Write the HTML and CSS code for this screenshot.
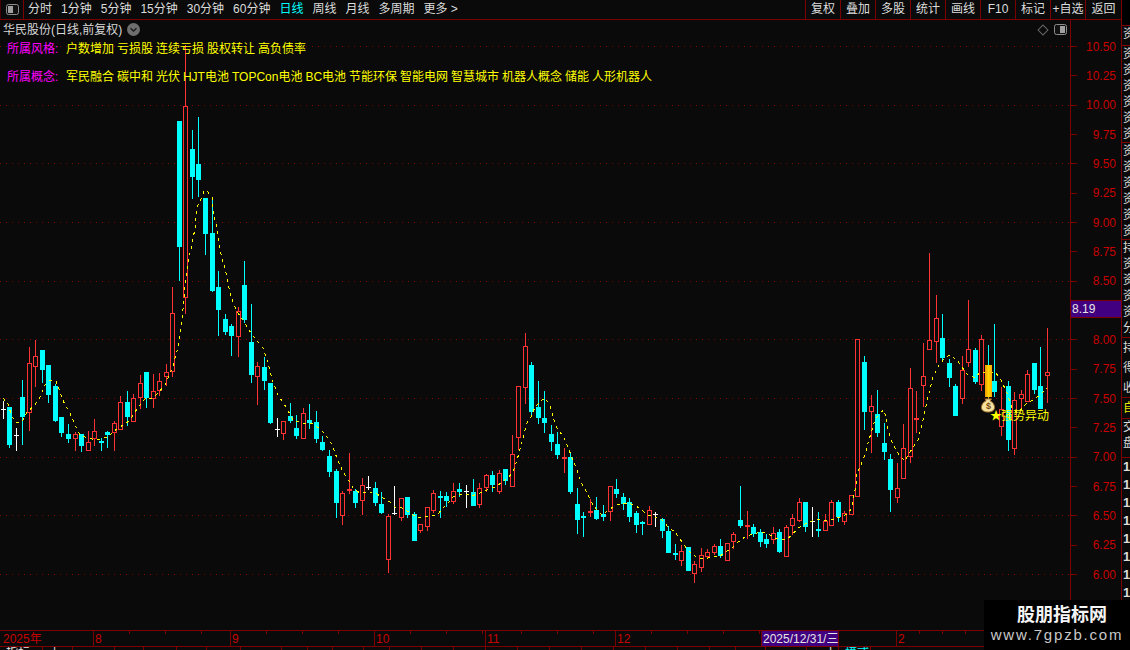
FILE: index.html
```html
<!DOCTYPE html>
<html lang="zh-CN">
<head>
<meta charset="utf-8">
<title>华民股份 日线</title>
<link rel="stylesheet" href="styles.css">
</head>
<body>
<div class="app">
  <header class="toolbar">
    <div class="toolbar-main">
      <div class="panel-btn">
        <svg class="panel-icon" viewBox="0 0 13 11"><rect x="0.5" y="0.5" width="12" height="10" rx="2" class="icon-frame"/><rect x="2" y="2" width="5" height="7" class="icon-fill"/></svg>
      </div>
      <nav class="periods">
        <span>分时</span><span>1分钟</span><span>5分钟</span><span>15分钟</span><span>30分钟</span><span>60分钟</span><span class="active">日线</span><span>周线</span><span>月线</span><span>多周期</span><span>更多 &gt;</span>
      </nav>
      <div class="actions">
        <span>复权</span><span>叠加</span><span>多股</span><span>统计</span><span>画线</span><span>F10</span><span>标记</span><span>+自选</span><span>返回</span>
      </div>
    </div>
    <div class="toolbar-end"></div>
  </header>

  <main class="main">
    <section class="chart">
      <svg id="plot" class="plot" viewBox="0 20 1070 610">
        <defs>
          <linearGradient id="signalBar" x1="0" x2="1" y1="0" y2="0">
            <stop offset="0" stop-color="#f09a00"/>
            <stop offset="0.5" stop-color="#ffd400"/>
            <stop offset="1" stop-color="#ffab00"/>
          </linearGradient>
        </defs>
      </svg>
      <div class="legend">
        <div class="title-row"><span>华民股份(日线,前复权)</span>
          <svg class="chevron" viewBox="0 0 13 13"><circle cx="6.5" cy="6.5" r="6.5" class="chevron-bg"/><path d="M3.5 5.2 L6.5 8 L9.5 5.2" class="chevron-mark"/></svg>
        </div>
        <div class="tag-row tag-first"><span class="tag-label">所属风格:</span><span class="tag-values">户数增加 亏损股 连续亏损 股权转让 高负债率</span></div>
        <div class="tag-row tag-second"><span class="tag-label">所属概念:</span><span class="tag-values">军民融合 碳中和 光伏 HJT电池 TOPCon电池 BC电池 节能环保 智能电网 智慧城市 机器人概念 储能 人形机器人</span></div>
      </div>
      <div class="chart-tools">
        <span class="diamond"></span>
        <svg class="panel-icon" viewBox="0 0 13 11"><rect x="0.5" y="0.5" width="12" height="10" rx="2" class="icon-frame"/><rect x="6" y="2" width="5" height="7" class="icon-fill"/></svg>
      </div>
    </section>

    <aside class="axis">
      <div class="scale"><i></i><span>10.50</span></div>
      <div class="scale"><i></i><span>10.25</span></div>
      <div class="scale"><i></i><span>10.00</span></div>
      <div class="scale"><i></i><span>9.75</span></div>
      <div class="scale"><i></i><span>9.50</span></div>
      <div class="scale"><i></i><span>9.25</span></div>
      <div class="scale"><i></i><span>9.00</span></div>
      <div class="scale"><i></i><span>8.75</span></div>
      <div class="scale"><i></i><span>8.50</span></div>
      <div class="scale"><i></i></div>
      <div class="scale"><i></i><span>8.00</span></div>
      <div class="scale"><i></i><span>7.75</span></div>
      <div class="scale"><i></i><span>7.50</span></div>
      <div class="scale"><i></i><span>7.25</span></div>
      <div class="scale"><i></i><span>7.00</span></div>
      <div class="scale"><i></i><span>6.75</span></div>
      <div class="scale"><i></i><span>6.50</span></div>
      <div class="scale"><i></i><span>6.25</span></div>
      <div class="scale"><i></i><span>6.00</span></div>
      <div class="price-flag">8.19</div>
    </aside>

    <aside class="side">
      <div class="side-cell s1"><div class="side-text">资</div></div>
      <div class="side-cell s2"><div class="side-text">资资资资资资</div></div>
      <div class="side-cell s2"><div class="side-text">资资资资资资</div></div>
      <div class="side-cell s3"><div class="side-text">持资资资资分</div></div>
      <div class="side-cell s4"><div class="side-text">持得收</div></div>
      <div class="side-cell s5"><div class="side-text side-yellow">自</div></div>
      <div class="side-cell s6"><div class="side-text">交盘</div></div>
      <div class="side-cell s7"><div class="side-text side-digits">11111111</div></div>
    </aside>
  </main>

  <div class="timeline">
    <span class="seg seg-year">2025年</span>
    <span class="seg seg-aug">8</span>
    <span class="seg seg-sep">9</span>
    <span class="seg seg-oct">10</span>
    <span class="seg seg-nov">11</span>
    <span class="seg seg-dec">12</span>
    <span class="seg seg-cursor">2025/12/31/三</span>
    <span class="seg seg-jan"></span>
    <span class="seg seg-feb">2</span>
  </div>

  <div class="strip">
    <span class="strip-white">指标</span><span>上</span><span></span><span></span><span></span><span></span><span></span><span></span><span></span><span></span><span></span><span></span>
    <span></span><span></span><span></span><span></span><span></span><span></span><span></span><span></span><span></span><span></span><span></span>
    <span></span><span></span><span class="strip-white strip-mid">上</span><span class="strip-cyan">模式</span>
  </div>

  <div class="watermark">
    <div class="wm-name">股朋指标网</div>
    <div class="wm-url">www.7gpzb.com</div>
  </div>
</div>
<script src="app.js"></script>
</body>
</html>
```

FILE: styles.css
```css
* { box-sizing: border-box; }

html, body {
  margin: 0;
  width: 1130px;
  height: 650px;
  overflow: hidden;
  background: #0a0a0a;
}

body {
  font-family: "Liberation Sans", "Noto Sans CJK SC", sans-serif;
  font-size: 12px;
  color: #dcdcdc;
}

.app {
  position: relative;
  display: flex;
  flex-direction: column;
  width: 1130px;
  height: 650px;
}

/* top toolbar */
.toolbar {
  display: flex;
  height: 20px;
  flex: none;
}

.toolbar-main {
  display: flex;
  flex: 1;
  align-items: stretch;
  line-height: 19px;
  border-bottom: 1px solid #7d0000;
}

.toolbar-end {
  width: 8px;
  background: #000;
}

.panel-btn {
  display: flex;
  align-items: center;
  justify-content: center;
  width: 24px;
  border-right: 1px solid #7d0000;
  border-left: 1px solid #4a0000;
}

.panel-icon {
  display: block;
  width: 13px;
  height: 11px;
}

.icon-frame {
  fill: #111;
  stroke: #8c8c8c;
}

.icon-fill {
  fill: #a0a0a0;
}

.periods {
  display: flex;
  gap: 9px;
  padding-left: 4px;
}

.periods .active {
  color: #00ffff;
}

.actions {
  display: flex;
  margin-left: auto;
}

.actions span {
  width: 35px;
  text-align: center;
  border-left: 1px solid #7d0000;
}

.actions span:last-child {
  width: 37px;
  border-right: 1px solid #7d0000;
}

/* main area */
.main {
  display: flex;
  height: 610px;
  flex: none;
}

.chart {
  position: relative;
  width: 1071px;
  flex: none;
  border-right: 1px solid #7d0000;
}

.plot {
  display: block;
  width: 1070px;
  height: 610px;
}

.legend {
  position: absolute;
  top: 0;
  left: 0;
  line-height: 16px;
}

.title-row {
  display: flex;
  align-items: center;
  gap: 5px;
  height: 18px;
  padding: 1px 0 0 3px;
  color: #d8d8d8;
}

.chevron {
  width: 13px;
  height: 13px;
}

.chevron-bg {
  fill: #6e6e6e;
}

.chevron-mark {
  fill: none;
  stroke: #1c1c1c;
  stroke-width: 1.4;
}

.tag-row {
  display: flex;
  padding-left: 7px;
  white-space: nowrap;
}

.tag-first {
  margin-top: 3px;
}

.tag-second {
  margin-top: 12px;
}

.tag-label {
  width: 59px;
  color: #ff00ff;
}

.tag-values {
  color: #ffff00;
  word-spacing: -0.35px;
}

.chart-tools {
  position: absolute;
  top: 4px;
  right: 3px;
  display: flex;
  align-items: center;
  gap: 7px;
}

.diamond {
  width: 8px;
  height: 8px;
  border: 1px solid #666;
  transform: rotate(45deg);
}

/* price axis */
.axis {
  position: relative;
  width: 51px;
  flex: none;
  padding-top: 12px;
  color: #c80000;
  border-right: 1px solid #7d0000;
}

.scale {
  display: flex;
  align-items: center;
  justify-content: space-between;
  height: 29.33px;
  padding-right: 5px;
}

.scale i {
  width: 6px;
  height: 1px;
  background: #7d0000;
}

.price-flag {
  position: absolute;
  top: 280px;
  left: 0;
  width: 50px;
  height: 18px;
  padding-left: 1px;
  line-height: 16px;
  color: #e6e6e6;
  background: #40007f;
  border-top: 1px solid #7d0000;
  border-bottom: 1px solid #7d0000;
}

/* clipped side tabs */
.side {
  display: flex;
  flex-direction: column;
  width: 8px;
  flex: none;
  padding-top: 5px;
  background: linear-gradient(#000 5px, #0a0a0a 5px);
}

.side-cell {
  flex: none;
  overflow: hidden;
  border-top: 1px solid #7d0000;
}

.side-text {
  width: 13px;
  padding-left: 1px;
  line-height: 16px;
  word-break: break-all;
}

.s1 { height: 20px; }
.s2 { height: 97px; }
.s3 { height: 98px; }
.s4 { height: 60px; }
.s5 { height: 21px; }
.s6 { height: 39px; }
.s7 { height: 143px; }

.s4 .side-text { line-height: 20px; }
.side-yellow { color: #e8e800; line-height: 20px; }
.side-digits { width: 8px; line-height: 18px; font-size: 13px; font-weight: bold; }

/* time axis */
.timeline {
  display: flex;
  height: 17px;
  flex: none;
  color: #c80000;
  line-height: 17px;
  border-top: 1px solid #7d0000;
  border-bottom: 1px solid #7d0000;
}

.seg {
  flex: none;
  padding-left: 1px;
  border-left: 1px solid #7d0000;
  white-space: nowrap;
}

.seg-year { width: 93px; padding-left: 3px; border-left: 0; }
.seg-aug, .seg-sep, .seg-oct, .seg-nov, .seg-dec, .seg-feb {
  background-image: repeating-linear-gradient(90deg, transparent 0, transparent 35px, #7d0000 35px, #7d0000 36px);
  background-repeat: no-repeat;
  background-size: 100% 3px;
}
.seg-aug { width: 137px; }
.seg-sep { width: 144px; }
.seg-oct { width: 111px; }
.seg-nov { width: 130px; }
.seg-dec { width: 146px; }
.seg-cursor {
  width: 78px;
  padding-left: 1px;
  color: #e6e6e6;
  background: #40007f;
  border-right: 1px solid #7d0000;
}
.seg-jan { width: 57px; border-left: 0; }
.seg-feb { width: 88px; background-image: repeating-linear-gradient(90deg, transparent 0, transparent 22px, #7d0000 22px, #7d0000 23px); }

/* clipped bottom strip */
.strip {
  display: grid;
  grid-template-columns: 43px 30px 42px 29px 33px 30px 34px 41px 26px 25px 31px 26px repeat(10, 32px) 26px 30px 41px 32px 32px;
  height: 3px;
  flex: none;
  overflow: hidden;
  line-height: 12px;
}

.strip span {
  padding-left: 6px;
  border-right: 1px solid #7d0000;
  white-space: nowrap;
}

.strip .strip-mid { padding-left: 18px; }
.strip-white { color: #e6e6e6; }
.strip-cyan { color: #00ffff; }

/* site watermark */
.watermark {
  position: absolute;
  right: 0;
  bottom: 0;
  display: flex;
  flex-direction: column;
  align-items: center;
  width: 146px;
  height: 50px;
  padding-top: 5px;
  background: #000;
}

.wm-name {
  height: 21px;
  padding-left: 10px;
  font-size: 18px;
  line-height: 21px;
  font-weight: bold;
  color: #f4f4f4;
}

.wm-url {
  font-size: 15px;
  line-height: 18px;
  letter-spacing: 1.8px;
  color: #c8c8c8;
}
```

FILE: app.js
```js
// Daily candles: x, high, bodyTop, bodyBottom, low, kind
// kinds: c cyan, r red hollow, w white doji, R red doji, C cyan doji
var CANDLES = [
  [3,401,409,409,418,'w'],[9,407,407,444,447,'c'],[16,428,435,435,450,'w'],[22,380,397,416,444,'c'],
  [29,347,363,412,430,'r'],[35,340,356,366,386,'r'],[42,350,350,369,382,'c'],[48,365,365,394,402,'c'],
  [55,384,386,420,421,'c'],[61,417,417,432,436,'c'],[68,424,434,438,442,'c'],[75,432,434,438,450,'r'],
  [81,434,434,445,451,'c'],[88,431,442,450,450,'r'],[94,419,431,438,445,'r'],[101,438,441,441,450,'C'],
  [107,431,432,434,447,'c'],[114,421,423,432,450,'r'],[120,396,402,429,429,'r'],[127,391,402,416,425,'c'],
  [133,394,398,421,421,'r'],[140,375,383,397,408,'r'],[146,372,372,397,407,'c'],[153,374,391,398,407,'r'],
  [159,373,381,390,395,'r'],[166,364,372,376,385,'r'],[172,287,313,371,376,'r'],[179,121,121,246,280,'c'],
  [185,45,106,297,313,'r'],[192,130,149,176,198,'c'],[198,117,164,179,196,'c'],[205,198,198,233,254,'c'],
  [212,200,233,290,291,'c'],[218,271,287,309,335,'c'],[225,314,319,331,334,'c'],[231,324,326,335,355,'c'],
  [238,307,311,336,356,'r'],[244,261,285,319,322,'c'],[251,304,342,374,382,'c'],[257,362,366,376,404,'r'],
  [264,357,367,380,389,'c'],[270,383,383,422,423,'c'],[277,418,429,429,436,'w'],[283,421,421,433,439,'r'],
  [290,403,416,420,422,'c'],[296,415,428,435,438,'c'],[303,408,413,438,438,'r'],[309,404,420,422,428,'c'],
  [316,411,422,438,442,'c'],[322,436,442,449,450,'c'],[329,450,456,471,476,'c'],[336,469,471,502,517,'c'],
  [342,491,493,515,524,'r'],[349,453,489,489,493,'R'],[355,489,491,502,507,'c'],[362,478,485,500,514,'r'],
  [368,476,487,487,489,'w'],[375,482,488,502,505,'c'],[381,492,504,512,513,'c'],[388,514,516,559,572,'r'],
  [394,486,513,513,514,'w'],[401,498,498,517,520,'r'],[407,497,497,514,517,'c'],[414,512,514,540,540,'c'],
  [420,524,524,530,532,'r'],[427,507,507,526,530,'r'],[433,490,493,510,512,'r'],[440,491,496,496,517,'C'],
  [446,492,496,500,506,'c'],[453,483,491,501,503,'r'],[459,483,489,491,496,'c'],[466,485,491,491,507,'w'],
  [473,479,492,505,505,'c'],[479,483,488,504,507,'r'],[486,474,475,487,491,'r'],[492,471,475,484,491,'c'],
  [499,470,473,491,493,'r'],[505,469,469,480,484,'c'],[512,435,454,486,486,'r'],[518,386,386,437,449,'r'],
  [525,333,346,387,403,'r'],[531,362,365,411,414,'c'],[538,381,407,417,423,'c'],[544,391,418,422,432,'c'],
  [551,425,434,441,450,'c'],[557,432,444,454,458,'c'],[564,448,457,457,472,'R'],[570,452,457,491,493,'c'],
  [577,488,504,519,533,'c'],[583,512,516,516,536,'C'],[590,499,511,511,516,'R'],[596,497,510,518,519,'c'],
  [603,505,514,516,520,'c'],[610,486,486,511,520,'r'],[616,479,489,493,497,'c'],[623,493,497,503,509,'c'],
  [629,498,502,516,521,'c'],[636,511,513,524,532,'c'],[642,521,522,522,534,'C'],[649,506,510,524,524,'r'],
  [655,512,514,514,526,'w'],[662,518,519,530,537,'c'],[668,526,531,552,552,'c'],[675,544,553,553,559,'C'],
  [681,545,551,560,565,'r'],[688,547,547,570,570,'c'],[694,561,564,573,582,'r'],[701,548,555,567,571,'r'],
  [707,549,552,556,557,'r'],[714,544,546,552,554,'r'],[720,539,546,555,557,'c'],[727,543,543,560,560,'r'],
  [733,532,534,541,548,'r'],[740,486,520,525,527,'c'],[747,511,525,525,538,'R'],[753,524,527,533,536,'c'],
  [760,529,532,541,546,'c'],[766,534,539,543,547,'c'],[773,527,533,539,543,'r'],[779,529,532,551,552,'c'],
  [786,525,527,556,556,'r'],[792,514,518,525,534,'r'],[799,498,502,520,521,'r'],[805,502,502,526,531,'c'],
  [812,507,521,521,536,'w'],[818,512,529,529,536,'C'],[825,514,521,530,530,'r'],[831,500,502,525,525,'r'],
  [838,500,502,516,521,'c'],[844,511,513,521,524,'r'],[851,495,495,514,514,'r'],[857,339,339,496,496,'r'],
  [864,356,362,411,429,'c'],[871,395,406,411,452,'r'],[877,390,414,432,436,'c'],[884,423,443,451,459,'c'],
  [890,454,459,489,511,'c'],[897,463,488,497,502,'r'],[903,424,448,478,478,'r'],[910,368,388,456,462,'r'],
  [916,391,418,418,432,'R'],[923,343,376,385,406,'r'],[929,253,340,349,349,'r'],[936,295,318,341,362,'r'],
  [942,314,338,357,359,'c'],[949,359,363,377,386,'c'],[955,384,386,415,415,'c'],[962,356,370,398,403,'r'],
  [968,300,349,362,366,'r'],[975,348,350,381,383,'c'],[981,335,339,384,390,'r'],
  [994,324,381,391,396,'c'],[1001,387,409,426,435,'r'],[1008,381,386,439,450,'c'],[1014,392,400,448,454,'r'],
  [1021,390,394,398,410,'r'],[1027,370,374,401,401,'r'],[1034,363,363,389,393,'c'],[1040,347,386,408,408,'c'],
  [1047,328,372,375,402,'r']
];

var MA = '3,398 8,404 12,417 16,422 22,422 27,412 35,405 40,397 42,392 45,385 50,380 56,381 60,392 65,405 70,413 75,425 80,435 87,438 92,439 100,439 108,437 113,432 118,428 125,424 130,420 135,412 140,405 146,398 153,398 158,393 165,385 173,366 178,347 182,320 185,287 188,262 192,245 195,228 197,207 202,197 204,191 207,191 212,197 214,217 217,227 219,245 222,258 226,273 230,293 234,305 238,313 245,323 249,330 253,336 258,342 263,348 267,360 273,382 278,395 286,407 293,420 302,423 313,424 320,429 326,435 332,445 337,458 343,472 347,478 353,488 360,493 370,492 377,494 383,498 390,502 395,507 402,508 407,511 413,515 420,518 425,517 432,516 438,514 443,508 448,503 453,497 459,495 466,494 472,496 477,494 483,492 489,489 495,487 501,483 508,478 513,472 517,460 519,453 522,442 525,430 527,423 531,417 535,407 542,400 545,398 550,405 553,417 557,428 562,435 565,440 568,447 572,458 577,470 581,482 587,493 592,503 598,512 603,515 608,510 617,505 627,503 635,505 640,509 648,515 655,517 662,520 668,527 675,532 682,542 688,550 697,558 708,558 720,556 727,551 733,547 738,542 745,537 752,534 762,532 768,534 775,538 782,540 787,539 792,535 798,528 803,525 810,522 817,519 822,520 828,520 835,519 840,517 847,514 852,508 853,500 856,485 857,473 860,467 865,455 868,443 872,430 875,420 881,412 884,410 887,422 888,430 891,440 897,452 902,458 905,461 910,452 918,440 923,420 929,393 933,377 939,365 945,358 950,355 957,360 962,367 968,375 975,378 980,372 995,372 1000,378 1007,393 1012,408 1018,413 1027,403 1033,400 1040,395 1047,388';

var GRID = [46, 105, 163, 222, 281, 339, 398, 457, 515, 574];

var COLORS = { c: '#00ffff', C: '#00ffff', r: '#ff3333', R: '#ff3333', w: '#ffffff' };
var BG = '#0a0a0a';
var SVG_NS = 'http://www.w3.org/2000/svg';
var plot = document.getElementById('plot');

function add(tag, attrs, text) {
  var el = document.createElementNS(SVG_NS, tag);
  for (var k in attrs) el.setAttribute(k, attrs[k]);
  if (text) el.textContent = text;
  plot.appendChild(el);
  return el;
}

function box(x, y, w, h, fill) {
  return add('rect', { x: x, y: y, width: w, height: h, fill: fill });
}

GRID.forEach(function (y) {
  add('line', { x1: 0, x2: 1070, y1: y + 0.5, y2: y + 0.5, stroke: '#7d0000', 'stroke-dasharray': '1 5' });
});

CANDLES.forEach(function (c) {
  var x = c[0], hi = c[1], top = c[2], bot = c[3], lo = c[4], kind = c[5], col = COLORS[kind];
  box(x, hi, 1, lo - hi + 1, col);
  if (top === bot) {
    box(x - 2, top, 5, kind === 'w' ? 1 : 2, col);
  } else if (kind === 'r') {
    box(x - 2, top, 5, bot - top + 1, col);
    box(x - 1, top + 1, 3, bot - top - 1, BG);
  } else {
    box(x - 2, top, 5, bot - top + 1, col);
  }
});

add('polyline', {
  points: MA, fill: 'none', stroke: '#ffff00', 'stroke-width': 1,
  'stroke-dasharray': '3 4', 'shape-rendering': 'crispEdges'
});

// Strong-move signal on the candle at x = 988
box(988, 345, 1, 20, '#00ffff');
box(985, 365, 7, 32, 'url(#signalBar)');
box(988, 397, 1, 4, '#c8a040');
add('path', {
  d: 'M985.5 399 h6 l-1.5 2 c3 1 4.5 4 4.5 6.5 c0 3 -3 4.5 -6.5 4.5 s-6.5 -1.5 -6.5 -4.5 c0 -2.500 1.500 -5.500 4.500 -6.500 z',
  fill: '#f4e2a0', stroke: '#a87830'
});
add('text', { x: 988.5, y: 409, 'text-anchor': 'middle', 'font-size': 9, 'font-weight': 'bold', fill: '#7a4a10' }, '$');
add('text', { x: 990, y: 420, 'font-size': 12, fill: '#ffff00' }, '★');
add('text', { x: 1001, y: 420, 'font-size': 12, fill: '#ffff00' }, '强势异动');
```
